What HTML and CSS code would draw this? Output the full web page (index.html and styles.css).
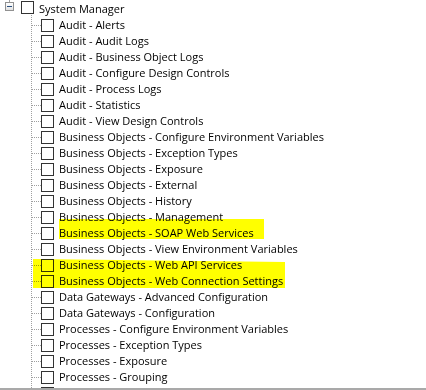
FILE: index.html
```html
<!DOCTYPE html>
<html lang="en">
<head>
    <meta charset="UTF-8">
    <meta name="viewport" content="width=device-width, initial-scale=1.0">
    <title>System Manager Permissions</title>
    <link rel="stylesheet" href="styles.css">
</head>
<body>
    <div class="tree">
        <div class="root-row">
            <span class="toggle"></span>
            <span class="check"></span>
            <span class="label">System Manager</span>
        </div>
        <ul class="children">
            <li><span class="branch"></span><span class="check"></span><span class="label">Audit - Alerts</span></li>
            <li><span class="branch"></span><span class="check"></span><span class="label">Audit - Audit Logs</span></li>
            <li><span class="branch"></span><span class="check"></span><span class="label">Audit - Business Object Logs</span></li>
            <li><span class="branch"></span><span class="check"></span><span class="label">Audit - Configure Design Controls</span></li>
            <li><span class="branch"></span><span class="check"></span><span class="label">Audit - Process Logs</span></li>
            <li><span class="branch"></span><span class="check"></span><span class="label">Audit - Statistics</span></li>
            <li><span class="branch"></span><span class="check"></span><span class="label">Audit - View Design Controls</span></li>
            <li><span class="branch"></span><span class="check"></span><span class="label">Business Objects - Configure Environment Variables</span></li>
            <li><span class="branch"></span><span class="check"></span><span class="label">Business Objects - Exception Types</span></li>
            <li><span class="branch"></span><span class="check"></span><span class="label">Business Objects - Exposure</span></li>
            <li><span class="branch"></span><span class="check"></span><span class="label">Business Objects - External</span></li>
            <li><span class="branch"></span><span class="check"></span><span class="label">Business Objects - History</span></li>
            <li><span class="branch"></span><span class="check"></span><span class="label">Business Objects - Management</span></li>
            <li><span class="branch"></span><span class="check"></span><span class="label">Business Objects - SOAP Web Services</span></li>
            <li><span class="branch"></span><span class="check"></span><span class="label">Business Objects - View Environment Variables</span></li>
            <li><span class="branch"></span><span class="check"></span><span class="label">Business Objects - Web API Services</span></li>
            <li><span class="branch"></span><span class="check"></span><span class="label">Business Objects - Web Connection Settings</span></li>
            <li><span class="branch"></span><span class="check"></span><span class="label">Data Gateways - Advanced Configuration</span></li>
            <li><span class="branch"></span><span class="check"></span><span class="label">Data Gateways - Configuration</span></li>
            <li><span class="branch"></span><span class="check"></span><span class="label">Processes - Configure Environment Variables</span></li>
            <li><span class="branch"></span><span class="check"></span><span class="label">Processes - Exception Types</span></li>
            <li><span class="branch"></span><span class="check"></span><span class="label">Processes - Exposure</span></li>
            <li><span class="branch"></span><span class="check"></span><span class="label">Processes - Grouping</span></li>
            <li class="cut"><span class="branch"></span><span class="check"></span></li>
        </ul>

        <!-- marker highlights drawn over the list -->
        <span class="marker marker-soap"></span>
        <span class="marker marker-web"></span>
    </div>
</body>
</html>
```

FILE: styles.css
```css
body {
    margin: 0;
    background: #fff;
    color: #000;
    font-family: "Open Sans", "Noto Sans", sans-serif;
    font-size: 11px;
}
.tree {
    position: relative;
    height: 387px;
    padding-top: 1px;
    overflow: hidden;
    border-bottom: 2px solid #a9a9a9;
}
.root-row {
    display: flex;
    align-items: flex-start;
    height: 16px;
    padding-left: 5px;
    background-image: linear-gradient(to bottom, #a0a0a0 50%, transparent 50%);
    background-size: 1px 2px;
    background-repeat: repeat-y;
    background-position: 31px 14px;
}
.toggle {
    position: relative;
    width: 7px;
    height: 7px;
    margin-top: 1px;
    border: 1px solid #919191;
    background: linear-gradient(#fff, #e2e2e2);
    margin-right: 7px;
}
.toggle::before {
    content: "";
    position: absolute;
    left: 3px;
    top: -3px;
    width: 1px;
    height: 2px;
    background: #a0a0a0;
}
.toggle::after {
    content: "";
    position: absolute;
    left: 1px;
    top: 3px;
    width: 5px;
    height: 1px;
    background: #2b4f7e;
}
.check {
    flex: none;
    width: 11px;
    height: 11px;
    border: 1px solid #333;
    background: #fff;
}
.label {
    line-height: 16px;
    margin-left: 5px;
    white-space: nowrap;
}
.children {
    list-style: none;
    margin: 0;
    padding: 0;
    background-image: linear-gradient(to bottom, #a0a0a0 50%, transparent 50%);
    background-size: 1px 2px;
    background-repeat: repeat-y;
    background-position: 31px 0;
}
.children li {
    display: flex;
    align-items: center;
    height: 16px;
}
.branch {
    width: 9px;
    height: 1px;
    margin-left: 32px;
    background-image: linear-gradient(to right, #a0a0a0 50%, transparent 50%);
    background-size: 2px 1px;
}
.marker {
    position: absolute;
    background: #ffff00;
    mix-blend-mode: multiply;
}
.marker-soap {
    left: 59px;
    top: 219px;
    width: 205px;
    height: 20px;
}
.marker-web {
    left: 33px;
    top: 259px;
    width: 252px;
    height: 29px;
    clip-path: polygon(0 0, 100% 3px, 100% 100%, 0 100%);
}
```
